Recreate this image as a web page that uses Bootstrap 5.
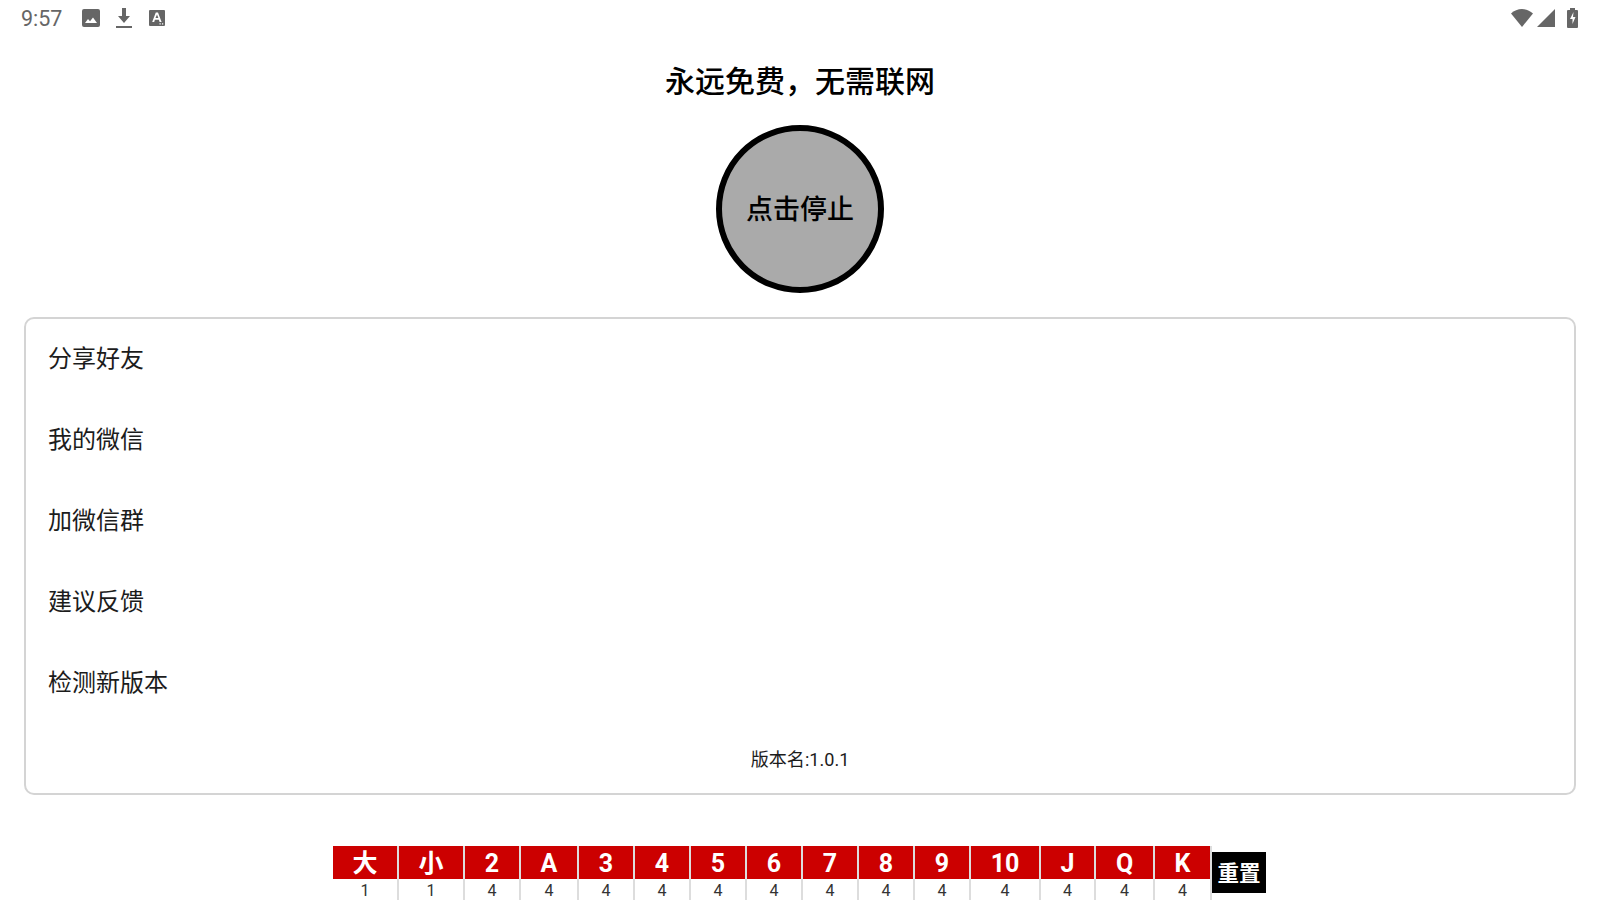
<!DOCTYPE html>
<html lang="zh-CN">
<head>
<meta charset="utf-8">
<title>永远免费&#65292;无需联网</title>
<link href="https://cdn.jsdelivr.net/npm/bootstrap@5.3.0/dist/css/bootstrap.min.css" rel="stylesheet">
<style>
html,body{height:900px;overflow:hidden;background:#fff;}
body{font-family:Roboto,"Noto Sans CJK SC",sans-serif;color:#000;}
.sbar{height:36px;padding:0 22px 0 21px;color:#666;}
.sbar-time{font-size:21.500px;line-height:36px;width:61px;padding-top:1px;}
.sbar svg{display:block;fill:#666;}
.ic-img{margin-right:16px;}
.ic-dl{margin-right:17px;}
.ic-sig{margin-left:4px;margin-right:12px;}
.headline{font-size:30px;font-weight:500;line-height:42px;margin:25px 0 0;text-align:center;}
.stopper{width:168px;height:168px;border:6px solid #000;background:#aaa;font-size:27px;font-weight:500;margin-top:22px;padding-top:3px;}
.panel{margin:24px 24px 0 24px;height:478px;border:2px solid #d4d4d4;border-radius:10px;padding:0 22px;}
.menu-row{height:81px;font-size:24px;line-height:81px;color:#1c1c1c;}
.ver{font-size:18.100px;line-height:24px;text-align:center;margin-top:24px;color:#1c1c1c;}
.strip{margin:51px 0 0 333px;align-items:flex-start;}
.tally{border-right:2px solid #ddd;text-align:center;height:54px;}
.tally-top{background:#c00;color:#fff;font-weight:700;font-size:25px;height:33px;line-height:36px;}
.tally-n{font-size:16px;line-height:23px;color:#333;}
.resetter{width:54px;height:41px;background:#000;color:#fff;font-weight:700;font-size:21.500px;line-height:43px;text-align:center;margin-top:6px;}
.w64{width:66px}.w54{width:56px}.w56{width:58px}.w68{width:70px}.w53{width:55px}.w57{width:59px}.w55{width:57px}
</style>
</head>
<body>
<div class="sbar d-flex align-items-center">
  <div class="sbar-time">9:57</div>
  <svg class="ic-img" width="18" height="18" viewBox="0 0 18 18"><path fill-rule="evenodd" d="M2 0h14a2 2 0 0 1 2 2v14a2 2 0 0 1-2 2H2a2 2 0 0 1-2-2V2a2 2 0 0 1 2-2zM3 14h12l-4-5.500-3 3.800-2-2.400z"/></svg>
  <svg class="ic-dl" width="16" height="20" viewBox="0 0 16 20"><path d="M6 0h4v8h4l-6 7-6-7h4zM0 18h16v2H0z"/></svg>
  <svg width="16" height="16" viewBox="0 0 16 16"><path fill-rule="evenodd" d="M1 0h14a1 1 0 0 1 1 1v14a1 1 0 0 1-1 1H1a1 1 0 0 1-1-1V1a1 1 0 0 1 1-1zM6.800 2.500 3.200 12h2l.7-2.200h4l.7 2.200h2L9 2.500zM6.500 8 8 4.500 9.400 8zM10.500 14.500h1.200v-1.200h-1.200zM13 14.500h1.200v-1.200H13z"/></svg>
  <div class="ms-auto d-flex align-items-center">
    <svg width="22" height="18" viewBox="0 0 22 18"><path d="M0 4.500C3 1.500 7 0 11 0s8 1.500 11 4.500L11 18z"/></svg>
    <svg class="ic-sig" width="18" height="18" viewBox="0 0 18 18"><path d="M18 0v18H0z"/></svg>
    <svg width="11" height="20" viewBox="0 0 11 20"><path fill-rule="evenodd" d="M3 0h5v2h2a1 1 0 0 1 1 1v16a1 1 0 0 1-1 1H1a1 1 0 0 1-1-1V3a1 1 0 0 1 1-1h2zM6.500 4 3 11h2.500v5L8.500 9H6z"/></svg>
  </div>
</div>
<h1 class="headline">永远免费&#65292;无需联网</h1>
<div class="d-flex justify-content-center">
  <div class="stopper rounded-circle d-flex align-items-center justify-content-center">点击停止</div>
</div>
<div class="panel">
  <div class="menu-row">分享好友</div>
  <div class="menu-row">我的微信</div>
  <div class="menu-row">加微信群</div>
  <div class="menu-row">建议反馈</div>
  <div class="menu-row">检测新版本</div>
  <div class="ver">版本名:1.0.1</div>
</div>
<div class="strip d-flex">
  <div class="tally w64"><div class="tally-top">大</div><div class="tally-n">1</div></div>
  <div class="tally w64"><div class="tally-top">小</div><div class="tally-n">1</div></div>
  <div class="tally w54"><div class="tally-top">2</div><div class="tally-n">4</div></div>
  <div class="tally w56"><div class="tally-top">A</div><div class="tally-n">4</div></div>
  <div class="tally w54"><div class="tally-top">3</div><div class="tally-n">4</div></div>
  <div class="tally w54"><div class="tally-top">4</div><div class="tally-n">4</div></div>
  <div class="tally w54"><div class="tally-top">5</div><div class="tally-n">4</div></div>
  <div class="tally w54"><div class="tally-top">6</div><div class="tally-n">4</div></div>
  <div class="tally w54"><div class="tally-top">7</div><div class="tally-n">4</div></div>
  <div class="tally w54"><div class="tally-top">8</div><div class="tally-n">4</div></div>
  <div class="tally w54"><div class="tally-top">9</div><div class="tally-n">4</div></div>
  <div class="tally w68"><div class="tally-top">10</div><div class="tally-n">4</div></div>
  <div class="tally w53"><div class="tally-top">J</div><div class="tally-n">4</div></div>
  <div class="tally w57"><div class="tally-top">Q</div><div class="tally-n">4</div></div>
  <div class="tally w55"><div class="tally-top">K</div><div class="tally-n">4</div></div>
  <div class="resetter">重置</div>
</div>
<script src="https://cdn.jsdelivr.net/npm/bootstrap@5.3.0/dist/js/bootstrap.bundle.min.js"></script>
</body>
</html>
